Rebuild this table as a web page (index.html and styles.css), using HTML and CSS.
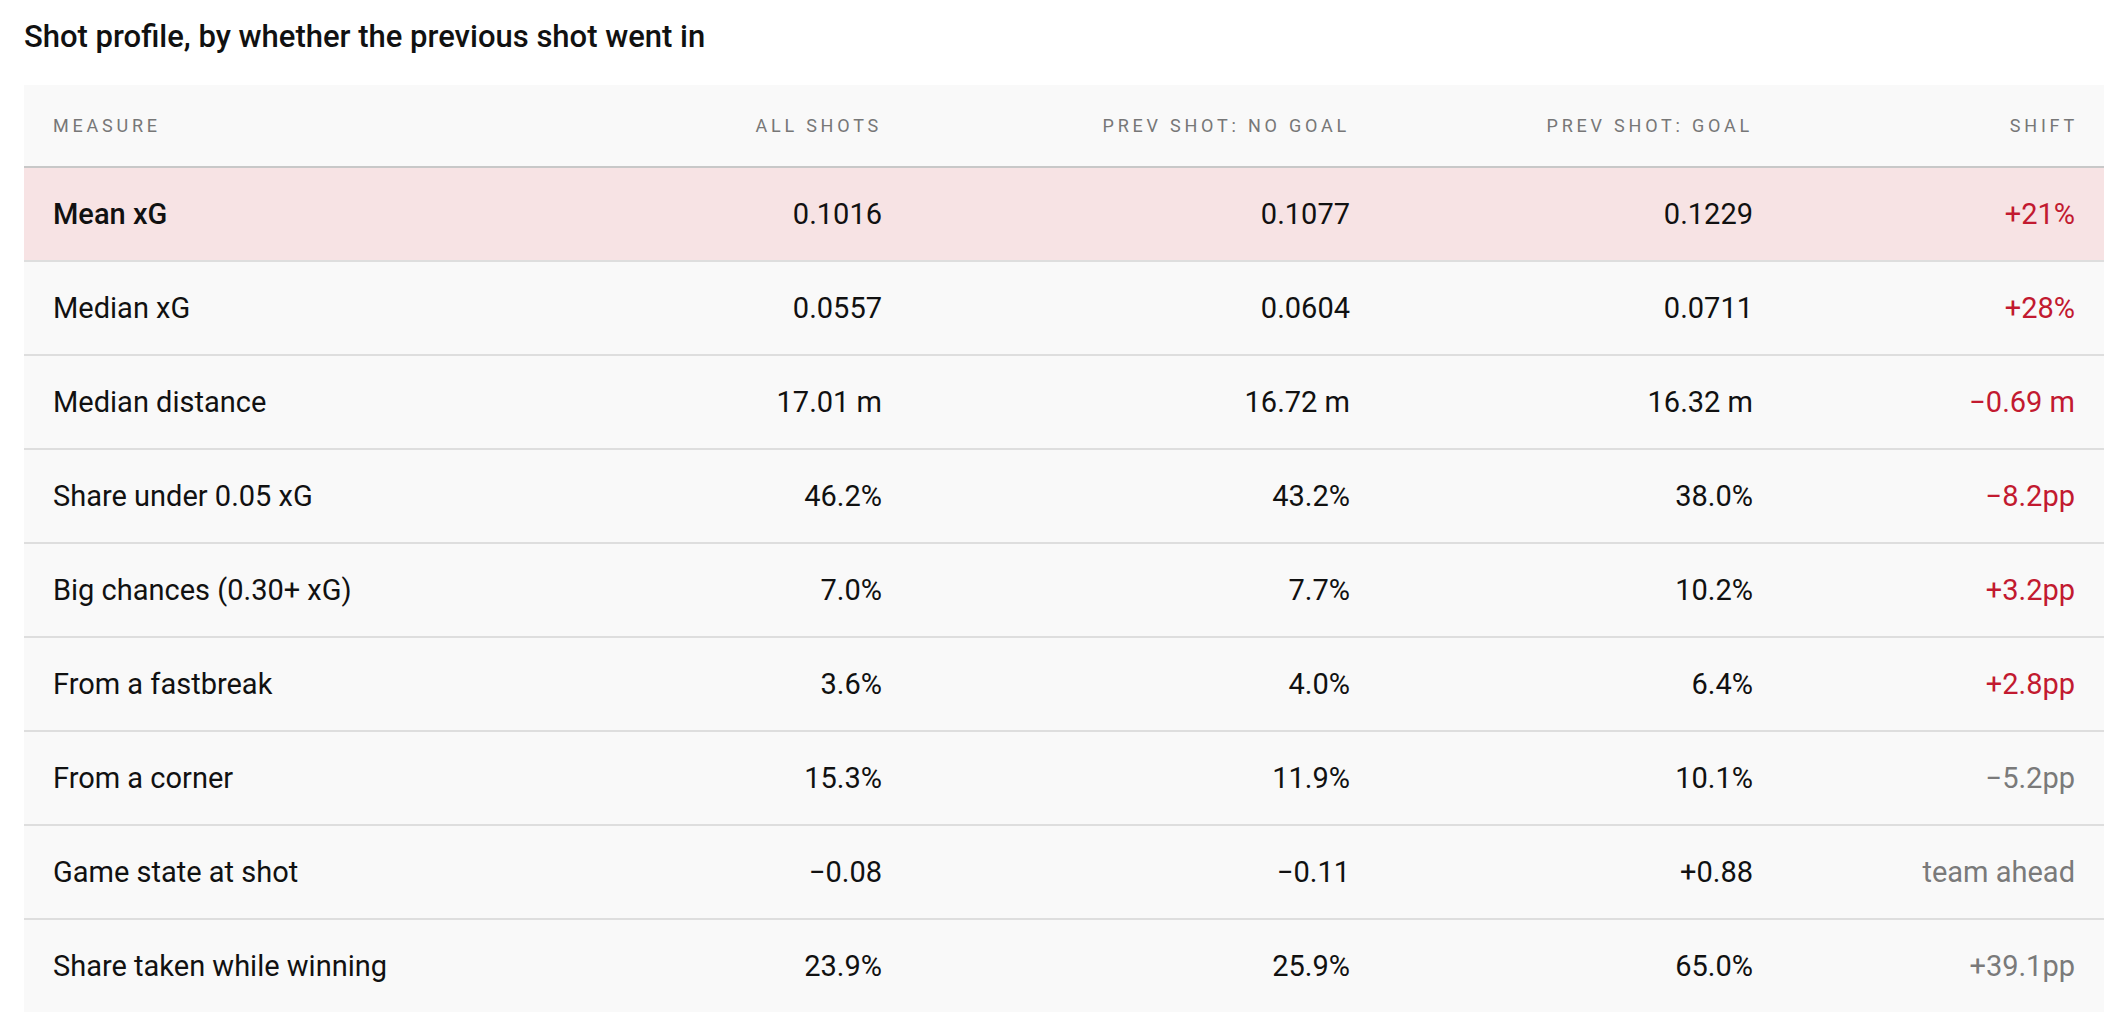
FILE: index.html
```html
<!DOCTYPE html>
<html lang="en">
<head>
<meta charset="utf-8">
<title>Shot profile</title>
<link rel="stylesheet" href="styles.css">
</head>
<body>
<div class="page">
  <h2 class="title">Shot profile, by whether the previous shot went in</h2>
  <table class="profile">
    <colgroup>
      <col class="c1"><col class="c2"><col class="c3"><col class="c4"><col class="c5">
    </colgroup>
    <thead>
      <tr>
        <th class="label">Measure</th>
        <th>All shots</th>
        <th>Prev shot: no goal</th>
        <th>Prev shot: goal</th>
        <th>Shift</th>
      </tr>
    </thead>
    <tbody>
      <tr class="hl">
        <td class="label strong">Mean xG</td>
        <td>0.1016</td><td>0.1077</td><td>0.1229</td><td class="up">+21%</td>
      </tr>
      <tr>
        <td class="label">Median xG</td>
        <td>0.0557</td><td>0.0604</td><td>0.0711</td><td class="up">+28%</td>
      </tr>
      <tr>
        <td class="label">Median distance</td>
        <td>17.01 m</td><td>16.72 m</td><td>16.32 m</td><td class="up">−0.69 m</td>
      </tr>
      <tr>
        <td class="label">Share under 0.05 xG</td>
        <td>46.2%</td><td>43.2%</td><td>38.0%</td><td class="up">−8.2pp</td>
      </tr>
      <tr>
        <td class="label">Big chances (0.30+ xG)</td>
        <td>7.0%</td><td>7.7%</td><td>10.2%</td><td class="up">+3.2pp</td>
      </tr>
      <tr>
        <td class="label">From a fastbreak</td>
        <td>3.6%</td><td>4.0%</td><td>6.4%</td><td class="up">+2.8pp</td>
      </tr>
      <tr>
        <td class="label">From a corner</td>
        <td>15.3%</td><td>11.9%</td><td>10.1%</td><td class="muted">−5.2pp</td>
      </tr>
      <tr>
        <td class="label">Game state at shot</td>
        <td>−0.08</td><td>−0.11</td><td>+0.88</td><td class="muted">team ahead</td>
      </tr>
      <tr class="last">
        <td class="label">Share taken while winning</td>
        <td>23.9%</td><td>25.9%</td><td>65.0%</td><td class="muted">+39.1pp</td>
      </tr>
    </tbody>
  </table>
</div>
</body>
</html>
```

FILE: styles.css
```css
html, body {
  margin: 0;
  padding: 0;
  background: #ffffff;
}

body {
  font-family: Roboto, "Noto Sans", "Liberation Sans", sans-serif;
  color: #111111;
}

.page {
  padding: 19px 24px 24px 24px;
}

.title {
  margin: 0 0 30px 0;
  font-size: 31px;
  line-height: 36px;
  font-weight: 500;
  color: #111111;
}

.profile {
  width: 2080px;
  border-collapse: collapse;
  table-layout: fixed;
  background: #f9f9f9;
}

.c1 { width: 560px; }
.c2 { width: 327px; }
.c3 { width: 468px; }
.c4 { width: 403px; }
.c5 { width: 322px; }

.profile th {
  height: 81px;
  padding: 0 29px;
  font-size: 18px;
  font-weight: 400;
  letter-spacing: 0.21em;
  text-transform: uppercase;
  color: #777777;
  text-align: right;
  border-bottom: 2px solid #c8c8c8;
  vertical-align: middle;
}

.profile th:last-child {
  padding-right: 26px;
}

.profile td {
  height: 92px;
  padding: 0 29px;
  font-size: 29px;
  text-align: right;
  vertical-align: middle;
  border-bottom: 2px solid #dedede;
  color: #111111;
}

.profile .label {
  text-align: left;
}

.profile tr.last td {
  border-bottom: none;
}

.profile tr.hl td {
  background: #f7e3e4;
}

.profile td.strong {
  font-weight: 500;
}

.profile td.up {
  color: #c21a30;
}

.profile td.muted {
  color: #7a7a7a;
}
```
